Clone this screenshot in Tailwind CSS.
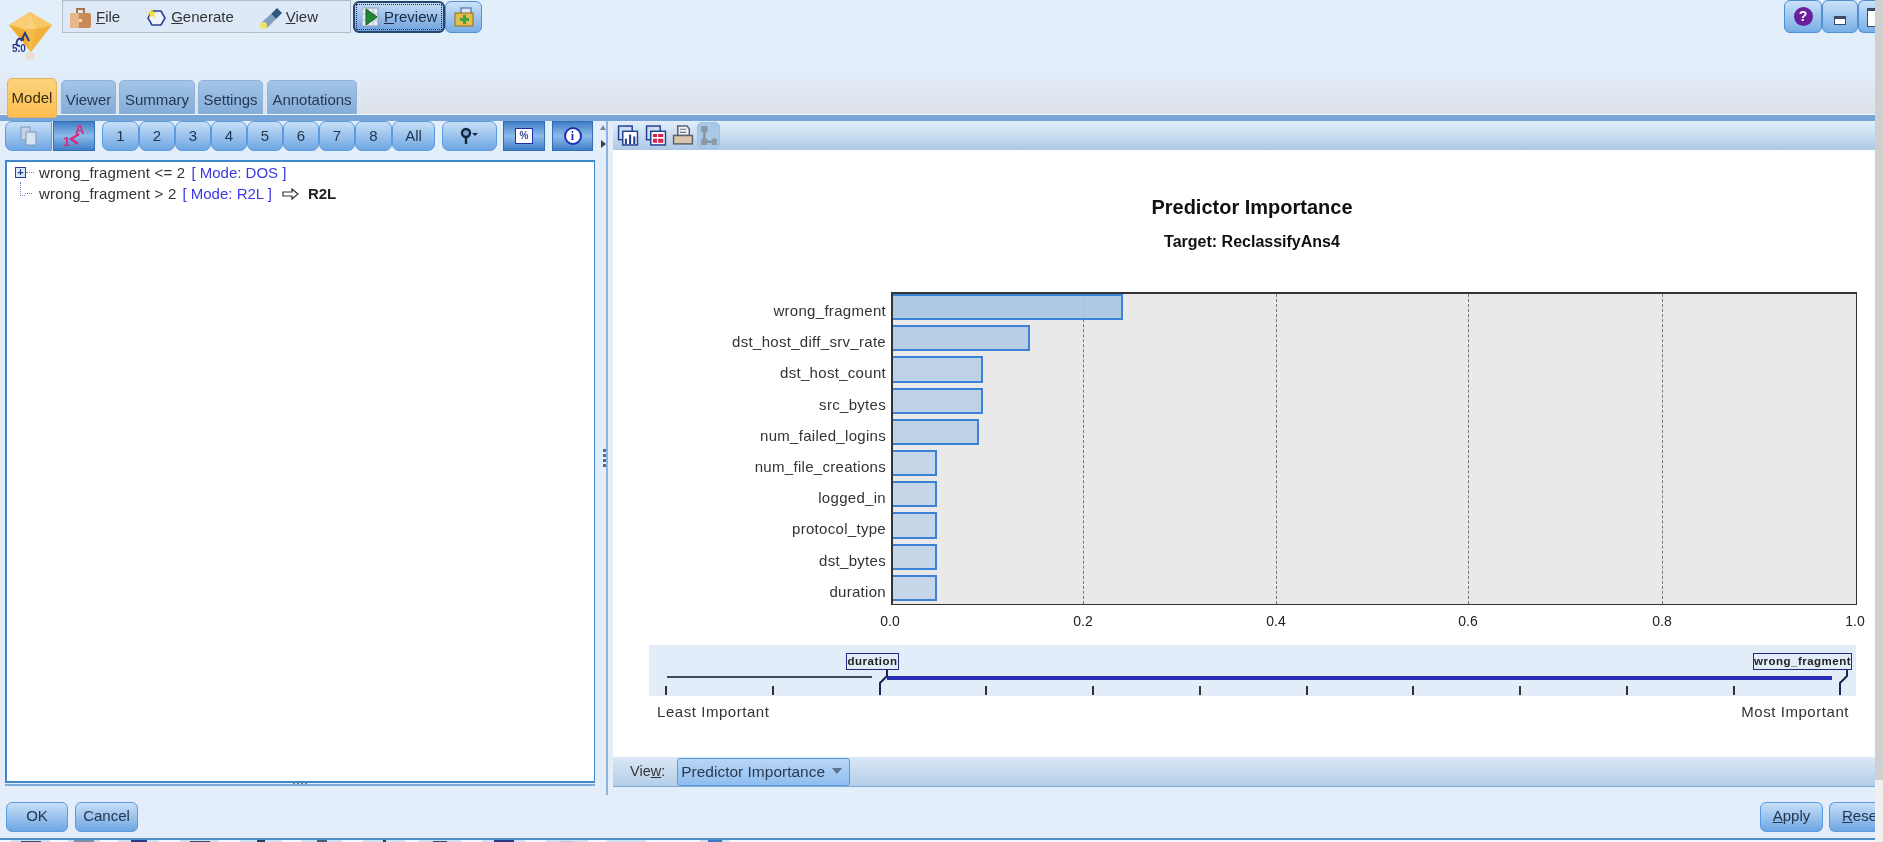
<!DOCTYPE html>
<html lang="en">
<head>
    <meta charset="UTF-8">
    <title>Model Nugget</title>
    <script src="https://cdn.jsdelivr.net/npm/@tailwindcss/browser@4"></script>
</head>
<body class="w-[1883px] h-[842px] overflow-hidden bg-[#f0f0f0] font-['Liberation_Sans',Arial,sans-serif] text-[#222]">
<div class="flex h-[842px] blur-[0.4px]">
  <!-- window -->
  <div class="w-[1875px] h-[842px] flex flex-col overflow-hidden bg-[#e3eefa] shrink-0">

    <!-- header: logo, menu and window buttons -->
    <div class="h-[114px] shrink-0 bg-gradient-to-b from-[#e3eefb] from-60% to-[#dde1e8] flex flex-col">
      <div class="h-[78px] flex items-start">
        <div class="w-[62px] h-[66px] shrink-0 pl-[6px] pt-[10px]">
          <svg width="48" height="56" viewBox="0 0 48 56">
            <ellipse cx="24" cy="46" rx="5" ry="4" fill="#eadfce"/>
            <path d="M24 2 L46 15 L25 42 L3 15 Z" fill="#f2b33d"/>
            <path d="M24 2 L46 15 L30 19 Z" fill="#f9c866"/>
            <path d="M24 2 L3 15 L17 19 Z" fill="#f8cd74"/>
            <path d="M24 2 L17 19 L30 19 Z" fill="#fad07c"/>
            <path d="M3 15 L17 19 L25 42 Z" fill="#f0ac30"/>
            <path d="M17 19 L30 19 L25 42 Z" fill="#f5bb48"/>
            <path d="M18 30 Q12 27 11 31 Q9 36 14 36" fill="none" stroke="#2b3a86" stroke-width="2"/>
            <path d="M15 31 L19 23 L23 31" fill="none" stroke="#2b3a86" stroke-width="2"/>
            <text x="6" y="42" font-size="10" font-weight="700" fill="#2b3a86" font-family="Liberation Sans">5.0</text>
          </svg>
        </div>
        <div class="w-[289px] h-[33px] flex items-center shrink-0 bg-[#dde9f6] border border-[#b6bcc4] text-[15px] text-[#333] pt-[2px]">
          <div class="flex items-center gap-[5px] ml-[7px]">
            <svg width="21" height="24" viewBox="0 0 21 24">
              <path d="M7 7 V3 h7 v4" fill="none" stroke="#a9764a" stroke-width="2"/>
              <rect x="0" y="7" width="21" height="15" rx="2" fill="#c98a58"/>
              <rect x="0" y="7" width="9" height="15" rx="2" fill="#e8b68b"/>
              <rect x="9" y="13" width="3" height="3" fill="#f5deb8"/>
            </svg>
            <span><u>F</u>ile</span>
          </div>
          <div class="flex items-center gap-[5px] ml-[27px]">
            <svg width="19" height="20" viewBox="0 0 19 20">
              <path d="M5 3 H14 L18 10 L14 17 H5 L1 10 Z" fill="#eef3fb" stroke="#2b3f96" stroke-width="1.6"/>
              <path d="M5 0 L6 4 L10 4 L7 6 L8 10 L5 8 L2 10 L3 6 L0 4 L4 4 Z" fill="#f4e13c"/>
            </svg>
            <span><u>G</u>enerate</span>
          </div>
          <div class="flex items-center gap-[3px] ml-[25px]">
            <svg width="24" height="24" viewBox="0 0 24 24">
              <path d="M12 8 L18 2 L23 7 L17 13 Z" fill="#33567e"/>
              <path d="M3 16 L12 8 L17 13 L8 22 Z" fill="#7f9fbe"/>
              <ellipse cx="4.5" cy="19.5" rx="3.5" ry="3.5" fill="#ece36a"/>
            </svg>
            <span><u>V</u>iew</span>
          </div>
        </div>
        <div class="ml-[2px] w-[92px] h-[32px] mt-[1px] shrink-0 rounded-[6px] border-2 border-[#26456f] bg-gradient-to-b from-[#c4dcf5] to-[#6da2dc] flex items-center p-[1px]">
          <div class="w-full h-full border border-dotted border-[#1a2f5c] flex items-center gap-[5px] pl-[5px] text-[15px] text-[#1c2a44]">
            <svg width="17" height="20" viewBox="0 0 17 20" class="shrink-0">
              <rect x="0" y="1" width="16" height="18" fill="#e7edf6" stroke="#8d9cb5"/>
              <path d="M1 7H16M1 13H16M6 1V19M11 1V19" stroke="#a9b6cb"/>
              <path d="M4 2 L15 10 L4 18 Z" fill="#1f8a32" stroke="#145a22"/>
            </svg>
            <span><u>P</u>review</span>
          </div>
        </div>
        <div class="w-[37px] h-[32px] mt-[1px] shrink-0 rounded-[6px] border border-[#4f8fd2] bg-gradient-to-b from-[#cbe2f8] to-[#77aee6] flex items-center justify-center">
          <svg width="20" height="20" viewBox="0 0 20 20">
            <rect x="7" y="1" width="10" height="9" fill="#dbe6f4" stroke="#395a9c"/>
            <rect x="1" y="6" width="18" height="13" fill="#e5bd4e" stroke="#8f6f1c"/>
            <path d="M9 8 h3 v3 h3 v3 h-3 v3 h-3 v-3 h-3 v-3 h3 Z" fill="#3aa63c"/>
          </svg>
        </div>
        <div class="flex-1"></div>
        <div class="flex shrink-0">
          <div class="w-[38px] h-[33px] rounded-[6px] border border-[#4f8fd2] bg-gradient-to-b from-[#cbe2f8] to-[#77aee6] flex items-center justify-center">
            <span class="w-[19px] h-[19px] rounded-full bg-[#6a1f9c] text-white text-[14px] font-bold leading-[19px] text-center">?</span>
          </div>
          <div class="w-[36px] h-[33px] rounded-[6px] border border-[#4f8fd2] bg-gradient-to-b from-[#cbe2f8] to-[#77aee6] flex items-end justify-center pb-[7px]">
            <span class="w-[12px] h-[9px] bg-white border border-[#3c4a66] border-t-[3px]"></span>
          </div>
          <div class="w-[17px] h-[33px] rounded-l-[6px] border border-r-0 border-[#4f8fd2] bg-gradient-to-b from-[#cbe2f8] to-[#77aee6] pt-[7px] pl-[8px] overflow-hidden">
            <span class="block w-[14px] h-[19px] bg-white border border-[#3c4a66] border-t-[3px]"></span>
          </div>
        </div>
      </div>
      <!-- tabs -->
      <div class="h-[36px] flex items-end pl-[7px] text-[15px] text-[#27384f]">
        <div class="w-[50px] h-[40px] -mb-[4px] relative z-10 rounded-t-[5px] rounded-b-[3px] border border-[#e2b661] bg-gradient-to-b from-[#fdd27c] to-[#fbbd4e] flex items-center justify-center text-[#3b2f14]">Model</div>
        <div class="w-[55px] h-[34px] ml-[4px] rounded-t-[5px] border-t border-x border-[#8fb3d9] bg-gradient-to-b from-[#a3c5e8] to-[#83acd9] flex items-center justify-center pt-[5px]">Viewer</div>
        <div class="w-[76px] h-[34px] ml-[3px] rounded-t-[5px] border-t border-x border-[#8fb3d9] bg-gradient-to-b from-[#a3c5e8] to-[#83acd9] flex items-center justify-center pt-[5px]">Summary</div>
        <div class="w-[65px] h-[34px] ml-[3px] rounded-t-[5px] border-t border-x border-[#8fb3d9] bg-gradient-to-b from-[#a3c5e8] to-[#83acd9] flex items-center justify-center pt-[5px]">Settings</div>
        <div class="w-[90px] h-[34px] ml-[4px] rounded-t-[5px] border-t border-x border-[#8fb3d9] bg-gradient-to-b from-[#a3c5e8] to-[#83acd9] flex items-center justify-center pt-[5px]">Annotations</div>
      </div>
    </div>
    <div class="h-[7px] shrink-0 bg-[#76a5d6] border-t border-[#f2f6fb]"></div>

    <!-- split panes -->
    <div class="h-[666px] shrink-0 flex">
      <!-- left pane -->
      <div class="w-[600px] shrink-0 flex flex-col pl-[5px] pr-[5px]">
        <div class="h-[32px] flex items-center text-[15px] text-[#24364f] mt-[-1px]">
          <div class="w-[47px] h-[30px] rounded-l-[7px] border border-[#5a9ade] bg-gradient-to-b from-[#c7dff7] to-[#6ea6e2] flex items-center justify-center">
            <svg width="18" height="20" viewBox="0 0 18 20"><path d="M1 1h9v13H1Z" fill="#c3d3e6" stroke="#7d97b8"/><path d="M6 6h10v13H6Z" fill="#d6e3f1" stroke="#7d97b8"/></svg>
          </div>
          <div class="w-[42px] h-[30px] ml-[1px] border border-[#2f6fb4] bg-gradient-to-b from-[#3f7fc7] via-[#8dbbea] to-[#3f7fc7] flex items-center justify-center">
            <svg width="26" height="28" viewBox="0 0 26 28"><path d="M18 12 L10 17 L17 22" fill="none" stroke="#d5287b" stroke-width="2.4"/><text x="14" y="12" font-size="13" font-weight="700" fill="#d5287b" font-family="Liberation Sans">A</text><text x="2" y="24" font-size="13" font-weight="700" fill="#d5287b" font-family="Liberation Sans">1</text></svg>
          </div>
          <div class="flex ml-[7px]">
            <div class="w-[37px] h-[30px] rounded-[7px] border border-[#5a9ade] bg-gradient-to-b from-[#c7dff7] to-[#6ea6e2] flex items-center justify-center">1</div>
            <div class="w-[36px] h-[30px] rounded-[7px] border border-[#5a9ade] bg-gradient-to-b from-[#c7dff7] to-[#6ea6e2] flex items-center justify-center">2</div>
            <div class="w-[36px] h-[30px] rounded-[7px] border border-[#5a9ade] bg-gradient-to-b from-[#c7dff7] to-[#6ea6e2] flex items-center justify-center">3</div>
            <div class="w-[36px] h-[30px] rounded-[7px] border border-[#5a9ade] bg-gradient-to-b from-[#c7dff7] to-[#6ea6e2] flex items-center justify-center">4</div>
            <div class="w-[36px] h-[30px] rounded-[7px] border border-[#5a9ade] bg-gradient-to-b from-[#c7dff7] to-[#6ea6e2] flex items-center justify-center">5</div>
            <div class="w-[36px] h-[30px] rounded-[7px] border border-[#5a9ade] bg-gradient-to-b from-[#c7dff7] to-[#6ea6e2] flex items-center justify-center">6</div>
            <div class="w-[36px] h-[30px] rounded-[7px] border border-[#5a9ade] bg-gradient-to-b from-[#c7dff7] to-[#6ea6e2] flex items-center justify-center">7</div>
            <div class="w-[37px] h-[30px] rounded-[7px] border border-[#5a9ade] bg-gradient-to-b from-[#c7dff7] to-[#6ea6e2] flex items-center justify-center">8</div>
            <div class="w-[43px] h-[30px] rounded-[7px] border border-[#5a9ade] bg-gradient-to-b from-[#c7dff7] to-[#6ea6e2] flex items-center justify-center">All</div>
          </div>
          <div class="w-[55px] h-[30px] ml-[7px] rounded-[7px] border border-[#5a9ade] bg-gradient-to-b from-[#c7dff7] to-[#6ea6e2] flex items-center justify-center">
            <svg width="20" height="18" viewBox="0 0 20 18"><circle cx="6" cy="6" r="4" fill="#7fa8d4" stroke="#14263c" stroke-width="2.4"/><path d="M6 10v7" stroke="#14263c" stroke-width="2.4"/><path d="M12 6h6l-3 3Z" fill="#14263c"/></svg>
          </div>
          <div class="w-[42px] h-[30px] ml-[6px] border border-[#2f6fb4] bg-gradient-to-b from-[#3f7fc7] via-[#8dbbea] to-[#3f7fc7] flex items-center justify-center">
            <span class="w-[18px] h-[16px] bg-white border border-[#1b2fb0] text-[10px] leading-[14px] text-center font-bold text-[#3a4a9a]">%</span>
          </div>
          <div class="w-[41px] h-[30px] ml-[7px] border border-[#2f6fb4] bg-gradient-to-b from-[#3f7fc7] via-[#8dbbea] to-[#3f7fc7] flex items-center justify-center">
            <span class="w-[18px] h-[18px] rounded-full bg-white border-2 border-[#1b2fb0] text-[12px] leading-[14px] text-center font-bold text-[#1b2fb0] font-['Liberation_Serif',serif]">i</span>
          </div>
        </div>
        <!-- tree -->
        <div class="h-[623px] mt-[8px] bg-white border-2 border-[#3f86cc] border-r-[1px] pl-[8px] text-[15px] leading-[21px] text-[#333]">
          <div class="flex items-center h-[21px]">
            <span class="w-[11px] h-[11px] border border-[#2d3ea0] bg-[#dbe6f7] text-[#2d3ea0] text-[11px] leading-[8px] text-center font-bold">+</span>
            <span class="w-[8px] border-t border-dotted border-[#6e86b8]"></span>
            <span class="ml-[5px] tracking-[0.2px]">wrong_fragment &lt;= 2</span>
            <span class="ml-[6px] text-[#3a3ae0]">[ Mode: DOS ]</span>
          </div>
          <div class="flex items-center h-[21px]">
            <span class="w-[5px] h-[14px] ml-[5px] -mt-[10px] border-l border-b border-dotted border-[#6e86b8]"></span>
            <span class="w-[7px] border-t border-dotted border-[#6e86b8]"></span>
            <span class="ml-[7px] tracking-[0.2px]">wrong_fragment &gt; 2</span>
            <span class="ml-[6px] text-[#3a3ae0]">[ Mode: R2L ]</span>
            <svg class="ml-[10px]" width="18" height="12" viewBox="0 0 18 12"><path d="M1 4h9V1l6 5-6 5V8H1Z" fill="none" stroke="#333" stroke-width="1.2"/></svg>
            <span class="ml-[8px] font-bold text-[#222]">R2L</span>
          </div>
        </div>
        <!-- horizontal splitter -->
        <div class="h-[4px] border-b-2 border-[#7ea9d8] flex justify-center gap-[2px] -mt-[1px]">
          <span class="w-[2px] h-[2px] bg-[#5b7b9f]"></span><span class="w-[2px] h-[2px] bg-[#5b7b9f]"></span><span class="w-[2px] h-[2px] bg-[#5b7b9f]"></span><span class="w-[2px] h-[2px] bg-[#5b7b9f]"></span>
        </div>
      </div>
      <!-- vertical splitter -->
      <div class="w-[13px] shrink-0 flex items-start">
        <div class="w-[6px] h-[666px] flex flex-col items-end">
          <svg class="mt-[4px]" width="6" height="5" viewBox="0 0 6 5"><path d="M3 0l3 5H0Z" fill="#7a8794"/></svg>
          <svg class="mt-[10px]" width="5" height="8" viewBox="0 0 5 8"><path d="M0 0l5 4-5 4Z" fill="#3a4450"/></svg>
          <div class="flex flex-col gap-[2px] mt-[301px]">
            <span class="w-[3px] h-[3px] bg-[#4d6c90]"></span><span class="w-[3px] h-[3px] bg-[#4d6c90]"></span><span class="w-[3px] h-[3px] bg-[#4d6c90]"></span><span class="w-[3px] h-[3px] bg-[#4d6c90]"></span>
          </div>
        </div>
        <div class="w-[2px] h-[674px] bg-[#8fb4dc]"></div>
      </div>
      <!-- right pane -->
      <div class="flex-1 flex flex-col min-w-0">
        <div class="h-[29px] shrink-0 bg-gradient-to-b from-[#e3eefa] to-[#aec9e6] flex items-center pl-[4px]">
          <svg width="22" height="21" viewBox="0 0 20 20"><rect x="1" y="1" width="13" height="13" fill="#cfdcf0" stroke="#22408f" stroke-width="1.4"/><rect x="5" y="6" width="14" height="13" fill="#fff" stroke="#22408f" stroke-width="1.4"/><path d="M8 18v-5M12 18V9M16 18v-7" stroke="#22408f" stroke-width="2"/></svg>
          <svg class="ml-[6px]" width="22" height="21" viewBox="0 0 20 20"><rect x="1" y="1" width="13" height="13" fill="#cfdcf0" stroke="#22408f" stroke-width="1.4"/><rect x="5" y="6" width="14" height="13" fill="#fff" stroke="#22408f" stroke-width="1.4"/><path d="M7 8.5h10v3H7ZM7 13h10v4H7Z" fill="#d3264f"/><path d="M11.5 8v10" stroke="#fff"/></svg>
          <svg class="ml-[5px]" width="22" height="21" viewBox="0 0 20 20"><path d="M5 1h9l2 3v6H5Z" fill="#eef1f6" stroke="#5a6270" stroke-width="1.4"/><rect x="1" y="10" width="18" height="8" fill="#d9c6a8" stroke="#5a6270" stroke-width="1.4"/><path d="M7 4h6M7 7h6" stroke="#777"/></svg>
          <div class="w-[23px] h-[27px] ml-[3px] rounded-[5px] bg-[#a8c8e8] border border-[#9dbfe2] flex items-center justify-center">
            <svg width="19" height="21" viewBox="0 0 18 20"><path d="M5 5v11h10" fill="none" stroke="#7f8d9b" stroke-width="2"/><rect x="2" y="1" width="6" height="6" fill="#8e98a3"/><rect x="2" y="13" width="6" height="6" fill="#8e98a3"/><rect x="12" y="13" width="5" height="6" fill="#8e98a3"/></svg>
          </div>
        </div>

        <!-- chart area -->
        <div class="h-[607px] shrink-0 bg-white flex flex-col">
          <div class="h-[142px] shrink-0 pt-[46px] w-[1278px] text-center text-[#111] font-bold">
            <div class="text-[20px] leading-[22px]">Predictor Importance</div>
            <div class="text-[16px] leading-[18px] mt-[15px]">Target: ReclassifyAns4</div>
          </div>
          <div class="flex">
            <!-- labels -->
            <div class="w-[278px] shrink-0 pt-[3px] text-right text-[15px] text-[#333] tracking-[0.3px]">
              <div class="h-[31.2px] leading-[31px] pr-[5px]">wrong_fragment</div>
              <div class="h-[31.2px] leading-[31px] pr-[5px]">dst_host_diff_srv_rate</div>
              <div class="h-[31.2px] leading-[31px] pr-[5px]">dst_host_count</div>
              <div class="h-[31.2px] leading-[31px] pr-[5px]">src_bytes</div>
              <div class="h-[31.2px] leading-[31px] pr-[5px]">num_failed_logins</div>
              <div class="h-[31.2px] leading-[31px] pr-[5px]">num_file_creations</div>
              <div class="h-[31.2px] leading-[31px] pr-[5px]">logged_in</div>
              <div class="h-[31.2px] leading-[31px] pr-[5px]">protocol_type</div>
              <div class="h-[31.2px] leading-[31px] pr-[5px]">dst_bytes</div>
              <div class="h-[31.2px] leading-[31px] pr-[5px]">duration</div>
            </div>
            <!-- plot -->
            <div class="w-[966px] h-[313px] shrink-0 relative bg-[#e9e9e9] border-t-2 border-l-2 border-[#333] border-r border-b">
              <div class="absolute inset-y-0 left-[190px] border-l border-dashed border-[#777]"></div>
              <div class="absolute inset-y-0 left-[383px] border-l border-dashed border-[#777]"></div>
              <div class="absolute inset-y-0 left-[575px] border-l border-dashed border-[#777]"></div>
              <div class="absolute inset-y-0 left-[769px] border-l border-dashed border-[#777]"></div>
              <div class="relative flex flex-col">
                <div class="h-[31.2px] pb-[5px]"><div class="h-full bg-[#a9c5e2]/90 border-2 border-l-0 border-[#3b82d6]" style="width:230px"></div></div>
                <div class="h-[31.2px] pb-[5px]"><div class="h-full bg-[#b3cbe4]/90 border-2 border-l-0 border-[#3b82d6]" style="width:137px"></div></div>
                <div class="h-[31.2px] pb-[5px]"><div class="h-full bg-[#b8cfe6]/90 border-2 border-l-0 border-[#3b82d6]" style="width:90px"></div></div>
                <div class="h-[31.2px] pb-[5px]"><div class="h-full bg-[#b8cfe6]/90 border-2 border-l-0 border-[#3b82d6]" style="width:90px"></div></div>
                <div class="h-[31.2px] pb-[5px]"><div class="h-full bg-[#b8cfe6]/90 border-2 border-l-0 border-[#3b82d6]" style="width:86px"></div></div>
                <div class="h-[31.2px] pb-[5px]"><div class="h-full bg-[#c0d4e8]/90 border-2 border-l-0 border-[#3b82d6]" style="width:44px"></div></div>
                <div class="h-[31.2px] pb-[5px]"><div class="h-full bg-[#c0d4e8]/90 border-2 border-l-0 border-[#3b82d6]" style="width:44px"></div></div>
                <div class="h-[31.2px] pb-[5px]"><div class="h-full bg-[#c0d4e8]/90 border-2 border-l-0 border-[#3b82d6]" style="width:44px"></div></div>
                <div class="h-[31.2px] pb-[5px]"><div class="h-full bg-[#c0d4e8]/90 border-2 border-l-0 border-[#3b82d6]" style="width:44px"></div></div>
                <div class="h-[31.2px] pb-[5px]"><div class="h-full bg-[#c0d4e8]/90 border-2 border-l-0 border-[#3b82d6]" style="width:44px"></div></div>
              </div>
              <!-- axis values -->
              <div class="absolute left-[-23px] top-[319px] w-[40px] text-center text-[14px] leading-[16px]">0.0</div>
              <div class="absolute left-[170px] top-[319px] w-[40px] text-center text-[14px] leading-[16px]">0.2</div>
              <div class="absolute left-[363px] top-[319px] w-[40px] text-center text-[14px] leading-[16px]">0.4</div>
              <div class="absolute left-[555px] top-[319px] w-[40px] text-center text-[14px] leading-[16px]">0.6</div>
              <div class="absolute left-[749px] top-[319px] w-[40px] text-center text-[14px] leading-[16px]">0.8</div>
              <div class="absolute left-[942px] top-[319px] w-[40px] text-center text-[14px] leading-[16px]">1.0</div>
            </div>
          </div>
          <!-- importance range slider -->
          <div class="ml-[36px] mt-[38px] w-[1207px] h-[51px] shrink-0 relative bg-[#e3edf9]">
            <div class="absolute left-[18px] top-[31px] w-[205px] h-[2px] bg-[#3d4a5f]"></div>
            <div class="absolute left-[238px] top-[31px] w-[945px] h-[4px] bg-[#2b2fb8]"></div>
            <div class="absolute left-[197px] top-[8px] w-[53px] h-[17px] border border-[#1f2a80] text-[11.5px] leading-[15px] text-center font-bold tracking-[0.5px] text-[#222]">duration</div>
            <div class="absolute left-[1104px] top-[8px] w-[99px] h-[17px] border border-[#1f2a80] text-[11.5px] leading-[15px] text-center font-bold tracking-[0.5px] text-[#222] whitespace-nowrap">wrong_fragment</div>
            <svg class="absolute left-[229px] top-[25px]" width="12" height="26" viewBox="0 0 12 26"><path d="M9 0v6L2 13v12" fill="none" stroke="#1d2a4d" stroke-width="2"/></svg>
            <svg class="absolute left-[1189px] top-[25px]" width="12" height="26" viewBox="0 0 12 26"><path d="M9 0v6L2 13v12" fill="none" stroke="#1d2a4d" stroke-width="2"/></svg>
            <div class="absolute left-[16px] top-[41px] w-[2px] h-[9px] bg-[#333]"></div>
            <div class="absolute left-[123px] top-[41px] w-[2px] h-[9px] bg-[#333]"></div>
            <div class="absolute left-[336px] top-[41px] w-[2px] h-[9px] bg-[#333]"></div>
            <div class="absolute left-[443px] top-[41px] w-[2px] h-[9px] bg-[#333]"></div>
            <div class="absolute left-[550px] top-[41px] w-[2px] h-[9px] bg-[#333]"></div>
            <div class="absolute left-[657px] top-[41px] w-[2px] h-[9px] bg-[#333]"></div>
            <div class="absolute left-[763px] top-[41px] w-[2px] h-[9px] bg-[#333]"></div>
            <div class="absolute left-[870px] top-[41px] w-[2px] h-[9px] bg-[#333]"></div>
            <div class="absolute left-[977px] top-[41px] w-[2px] h-[9px] bg-[#333]"></div>
            <div class="absolute left-[1084px] top-[41px] w-[2px] h-[9px] bg-[#333]"></div>
          </div>
          <div class="ml-[44px] mt-[5px] w-[1192px] flex justify-between text-[15px] text-[#333] tracking-[0.55px]">
            <span>Least Important</span>
            <span>Most Important</span>
          </div>
        </div>

        <!-- view bar -->
        <div class="h-[30px] shrink-0 bg-gradient-to-b from-[#dbe8f6] to-[#b4cde8] border-b border-[#7fa8d4] flex items-center pl-[17px] text-[14.5px] text-[#333]">
          <span>Vie<u>w</u>:</span>
          <div class="ml-[12px] w-[173px] h-[28px] rounded-[3px] border border-[#5a9ade] bg-gradient-to-b from-[#b9d6f5] to-[#8fbdf0] flex items-center pl-[3px] gap-[6px] text-[15.5px] text-[#2a3a50]">
            <span class="whitespace-nowrap">Predictor Importance</span>
            <svg class="shrink-0" width="12" height="7" viewBox="0 0 12 7"><path d="M1 0h10L6 6Z" fill="#5f7288"/></svg>
          </div>
        </div>
      </div>
    </div>

    <!-- dialog buttons -->
    <div class="h-[51px] shrink-0 flex items-center justify-between pl-[6px] text-[15px] text-[#24364f] pt-[8px]">
      <div class="flex gap-[7px]">
        <div class="w-[62px] h-[30px] rounded-[6px] border border-[#5a9ade] bg-gradient-to-b from-[#c7dff7] to-[#6ea6e2] flex items-center justify-center">OK</div>
        <div class="w-[63px] h-[30px] rounded-[6px] border border-[#5a9ade] bg-gradient-to-b from-[#c7dff7] to-[#6ea6e2] flex items-center justify-center">Cancel</div>
      </div>
      <div class="flex gap-[6px]">
        <div class="w-[63px] h-[30px] rounded-[6px] border border-[#5a9ade] bg-gradient-to-b from-[#c7dff7] to-[#6ea6e2] flex items-center justify-center"><span><u>A</u>pply</span></div>
        <div class="w-[46px] h-[30px] rounded-l-[6px] border border-r-0 border-[#5a9ade] bg-gradient-to-b from-[#c7dff7] to-[#6ea6e2] flex items-center pl-[12px] overflow-hidden"><span><u>R</u>ese</span></div>
      </div>
    </div>

    <!-- clipped toolbar of the window behind -->
    <div class="flex-1 min-h-0 border-t-2 border-[#4f8fc4] bg-[#f4f7fb] flex items-start overflow-hidden pl-[11px] gap-[21px]">
      <span class="w-[39px] h-[4px] bg-[#cfe0f3] flex justify-center"><span class="w-[20px] h-[2px] mt-[1px] bg-[#3a4a70]"></span></span>
      <span class="w-[32px] h-[4px] -ml-[3px] bg-[#cfe0f3] flex justify-center"><span class="w-[20px] h-[3px] bg-[#7d8fa8]"></span></span>
      <span class="w-[41px] h-[4px] -ml-[3px] bg-[#cfe0f3] flex justify-center"><span class="w-[16px] h-[3px] bg-[#2a3a80]"></span></span>
      <span class="w-[39px] h-[4px] bg-[#cfe0f3] flex justify-center"><span class="w-[20px] h-[2px] mt-[1px] bg-[#3a4a70]"></span></span>
      <span class="w-[42px] h-[4px] bg-[#cfe0f3] flex justify-center"><span class="w-[8px] h-[3px] bg-[#2a3a60]"></span></span>
      <span class="w-[41px] h-[4px] -ml-[2px] bg-[#cfe0f3] flex justify-center"><span class="w-[10px] h-[3px] bg-[#4a5a78]"></span></span>
      <span class="w-[42px] h-[4px] bg-[#cfe0f3] flex justify-center"><span class="w-[3px] h-[3px] bg-[#2a3a60]"></span></span>
      <span class="w-[42px] h-[4px] -ml-[7px] bg-[#cfe0f3] flex justify-center"><span class="w-[14px] h-[2px] mt-[1px] bg-[#3a4a70]"></span></span>
      <span class="w-[43px] h-[4px] bg-[#cfe0f3] flex justify-center"><span class="w-[20px] h-[3px] bg-[#2a3a80]"></span></span>
      <span class="w-[42px] h-[4px] bg-[#cfe0f3] flex justify-center"><span class="w-[12px] h-[2px] mt-[1px] bg-[#b9c4d2]"></span></span>
      <span class="w-[39px] h-[4px] -ml-[2px] bg-[#cfe0f3]"></span>
      <span class="w-[29px] h-[4px] ml-[33px] bg-[#cfe0f3] flex justify-center"><span class="w-[14px] h-[3px] bg-[#3d79c9]"></span></span>
    </div>
  </div>
  <!-- strip to the right of the window -->
  <div class="w-[8px] shrink-0 flex flex-col">
    <div class="h-[780px] bg-[#cfcfcf]"></div>
    <div class="flex-1 bg-[#f0f0f0]"></div>
  </div>
</div>
</body>
</html>
